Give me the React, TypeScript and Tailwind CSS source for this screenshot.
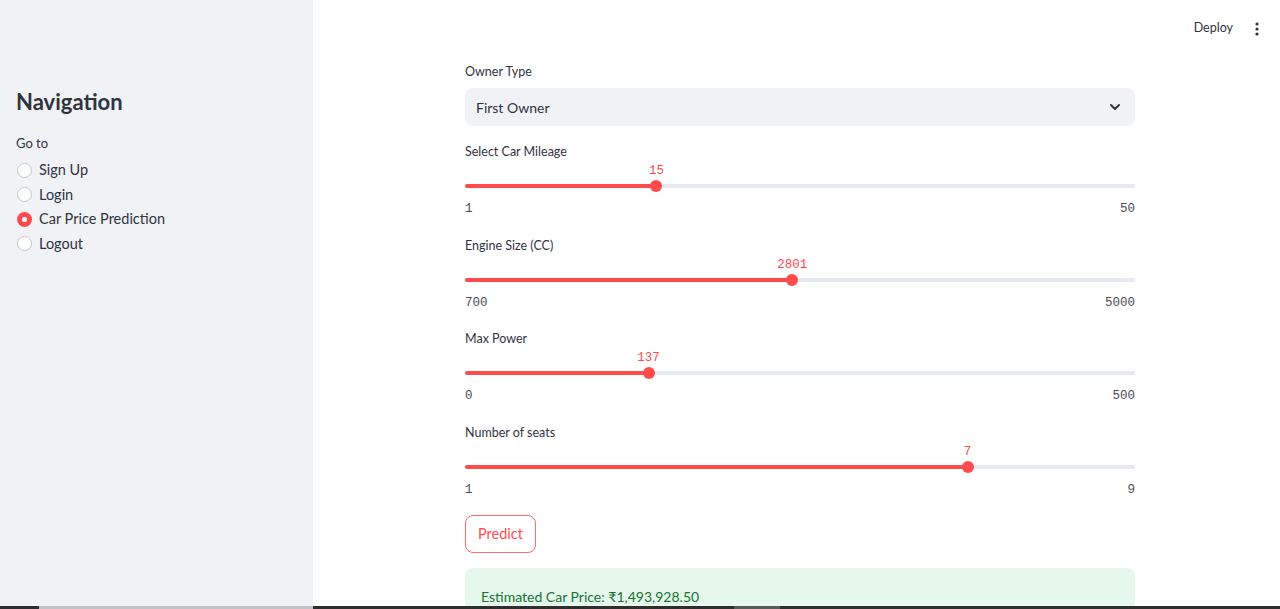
import React from "react";

const font = { fontFamily: '"Lato", "Liberation Sans", sans-serif' };

function Radio({ label, checked }: { label: string; checked?: boolean }) {
  return (
    <div className="flex items-center h-[24.5px] gap-[7px]">
      {checked ? (
        <div className="w-[15px] h-[15px] rounded-full bg-[#ff4b4b] flex items-center justify-center ml-[1px]">
          <div className="w-[5px] h-[5px] rounded-full bg-white" />
        </div>
      ) : (
        <div className="w-[15px] h-[15px] rounded-full bg-white border border-[#c4c7cf] ml-[1px]" />
      )}
      <span className="text-[14.5px] text-[#31333f] leading-[20px]">{label}</span>
    </div>
  );
}

function Slider({
  label,
  min,
  max,
  value,
}: {
  label: string;
  min: number;
  max: number;
  value: number;
}) {
  const pct = ((value - min) / (max - min)) * 100;
  return (
    <div className="flex flex-col">
      <div className="h-[20px] leading-[20px] text-[12.5px] text-[#31333f]">{label}</div>
      <div className="relative h-[36px]">
        <div className="absolute left-0 right-0 top-[22px] h-[4px] rounded-full bg-[#e6e9ef]" />
        <div
          className="absolute left-0 top-[22px] h-[4px] rounded-full bg-[#ff4b4b]"
          style={{ width: `${pct}%` }}
        />
        <div
          className="absolute top-[18px] w-[12px] h-[12px] -ml-[6px] rounded-full bg-[#ff4b4b]"
          style={{ left: `${pct}%` }}
        />
        <div
          className="absolute top-0 h-[18px] leading-[18px] text-[12.5px] text-[#ff4b4b] -translate-x-1/2"
          style={{ left: `${pct}%`, fontFamily: '"Liberation Mono", monospace' }}
        >
          {value}
        </div>
      </div>
      <div
        className="flex justify-between h-[22px] leading-[22px] text-[12.5px] text-[#4a4c56]"
        style={{ fontFamily: '"Liberation Mono", monospace' }}
      >
        <span>{min}</span>
        <span>{max}</span>
      </div>
    </div>
  );
}

export default function App() {
  return (
    <div className="w-[1280px] h-[609px] overflow-hidden bg-white" style={font}>
      <div className="flex h-[606px] overflow-hidden">
        <aside className="w-[313px] shrink-0 bg-[#f0f2f6] pl-[16px] pt-[88px]">
          <h2 className="text-[22px] font-bold text-[#31333f] leading-[28px]">Navigation</h2>
          <div className="mt-[18px] text-[13px] text-[#31333f] leading-[18px]">Go to</div>
          <div className="mt-[6px] flex flex-col">
            <Radio label="Sign Up" />
            <Radio label="Login" />
            <Radio label="Car Price Prediction" checked />
            <Radio label="Logout" />
          </div>
        </aside>
        <main className="flex-1 flex flex-col">
          <header className="h-[56px] shrink-0 flex items-center justify-end pr-[21px] pt-[1px]">
            <span className="text-[12.5px] text-[#31333f] mr-[22px]">Deploy</span>
            <svg width="4" height="14" viewBox="0 0 4 14">
              <circle cx="2" cy="2" r="1.6" fill="#31333f" />
              <circle cx="2" cy="7" r="1.6" fill="#31333f" />
              <circle cx="2" cy="12" r="1.6" fill="#31333f" />
            </svg>
          </header>
          <div className="pl-[152px] w-[822px] shrink-0 flex flex-col">
            <div className="mt-[6px] h-[20px] leading-[20px] text-[12.5px] text-[#31333f]">Owner Type</div>
            <div className="mt-[6px] h-[38px] rounded-[8px] bg-[#f0f2f6] flex items-center justify-between pl-[11px] pr-[14px]">
              <span className="text-[14px] text-[#31333f]">First Owner</span>
              <svg width="12" height="8" viewBox="0 0 12 8">
                <path d="M2 2 L6 6 L10 2" stroke="#31333f" strokeWidth="2" fill="none" strokeLinecap="round" strokeLinejoin="round" />
              </svg>
            </div>
            <div className="mt-[16px] flex flex-col gap-[15px]">
              <div className="mb-[1px]">
                <Slider label="Select Car Mileage" min={1} max={50} value={15} />
              </div>
              <Slider label="Engine Size (CC)" min={700} max={5000} value={2801} />
              <div className="mb-[1px]">
                <Slider label="Max Power" min={0} max={500} value={137} />
              </div>
              <Slider label="Number of seats" min={1} max={9} value={7} />
            </div>
            <div className="mt-[14px]">
              <button className="h-[38px] px-[12px] rounded-[8px] border border-[#ff6b6b] bg-white text-[14.5px] text-[#ff4b4b]">
                Predict
              </button>
            </div>
            <div className="mt-[15px] shrink-0 rounded-[8px] bg-[#e6f8ec] px-[16px] pt-[16px] pb-[16px]">
              <span className="text-[14px] leading-[22px] text-[#177233]">Estimated Car Price: ₹1,493,928.50</span>
            </div>
          </div>
        </main>
      </div>
      <div className="flex h-[3px]">
        <div className="w-[39px] bg-[#2e2e2e]" />
        <div className="w-[274px] bg-[#c4c4c6]" />
        <div className="w-[421px] bg-[#2e2e2e]" />
        <div className="w-[46px] bg-[#5a5a5a]" />
        <div className="flex-1 bg-[#2e2e2e]" />
      </div>
    </div>
  );
}
